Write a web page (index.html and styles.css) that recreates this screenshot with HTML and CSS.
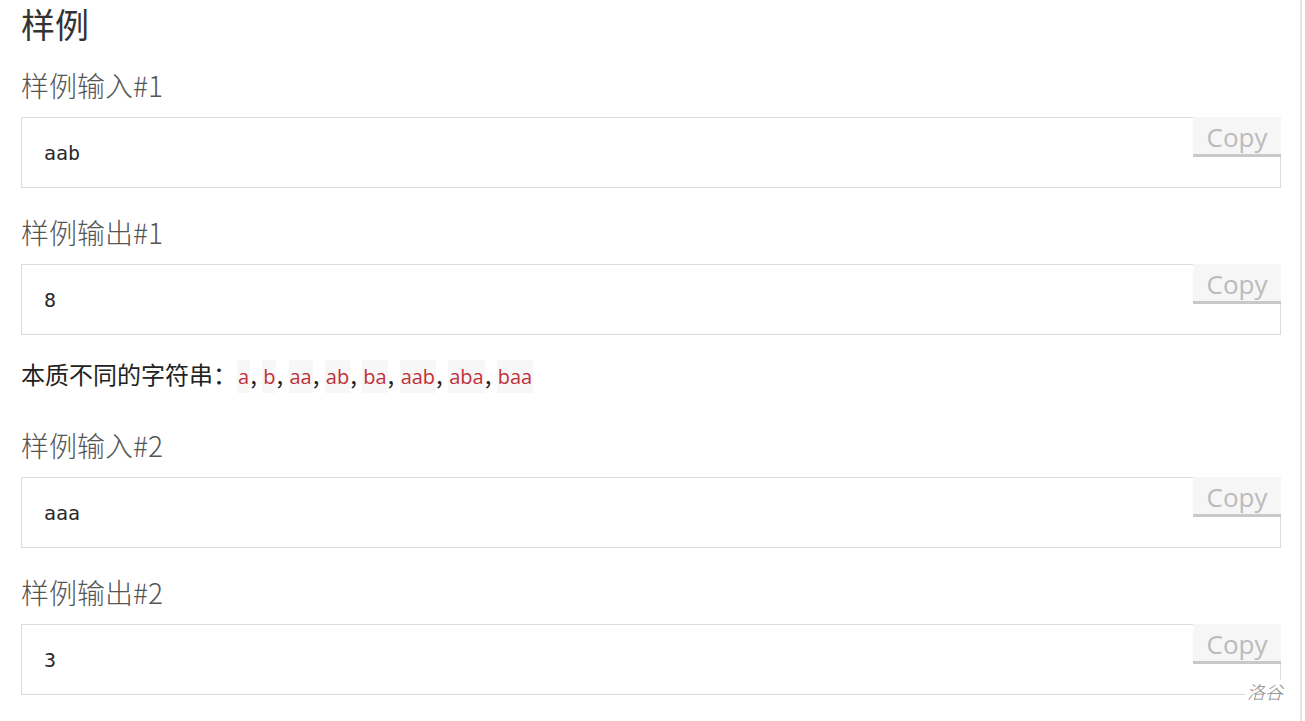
FILE: index.html
```html
<!DOCTYPE html>
<html lang="zh-CN">
<head>
<meta charset="utf-8">
<title>样例</title>
<link rel="stylesheet" href="styles.css">
</head>
<body>
<div class="frame">
  <div class="page">
    <h2 class="title">样例</h2>

    <h3 class="sub">样例输入#1</h3>
    <div class="box"><pre class="code">aab</pre><span class="copy">Copy</span></div>

    <h3 class="sub">样例输出#1</h3>
    <div class="box"><pre class="code">8</pre><span class="copy">Copy</span></div>

    <p class="desc">本质不同的字符串：<code>a</code>, <code>b</code>, <code>aa</code>, <code>ab</code>, <code>ba</code>, <code>aab</code>, <code>aba</code>, <code>baa</code></p>

    <h3 class="sub sub-after-text">样例输入#2</h3>
    <div class="box"><pre class="code">aaa</pre><span class="copy">Copy</span></div>

    <h3 class="sub">样例输出#2</h3>
    <div class="box"><pre class="code">3</pre><span class="copy">Copy</span></div>
  </div>
  <span class="mark">洛谷</span>
</div>
</body>
</html>
```

FILE: styles.css
```css
html, body {
  margin: 0;
  padding: 0;
  background: #fff;
}

body {
  font-family: "Noto Sans CJK SC", "Noto Sans", sans-serif;
  color: #333;
  overflow: hidden;
}

.frame {
  position: relative;
  width: 1302px;
  height: 721px;
  border-right: 2px solid #e3e3e3;
  box-sizing: border-box;
}

.page {
  padding: 0 0 0 21px;
  width: 1260px;
}

.title {
  margin: 0;
  font-size: 34px;
  line-height: 48px;
  font-weight: 400;
  color: #333;
}

.sub {
  margin: 24px 0 0;
  font-size: 28px;
  line-height: 40px;
  font-weight: 300;
  color: #555;
}

.title + .sub {
  margin-top: 17px;
}

.sub-after-text {
  margin-top: 32px;
}

.box {
  position: relative;
  margin-top: 12px;
  height: 71px;
  border: 1px solid #dcdcdc;
  box-sizing: border-box;
  display: flex;
  align-items: center;
}

.code {
  margin: 0;
  padding: 0 0 0 22px;
  font-family: "DejaVu Sans Mono", "Liberation Mono", monospace;
  font-size: 20px;
  line-height: 24px;
  color: #2a2a2a;
}

.copy {
  position: absolute;
  top: -1px;
  right: -1px;
  width: 88px;
  height: 40px;
  box-sizing: border-box;
  padding-top: 2px;
  background: #f6f6f6;
  border-bottom: 3px solid #c8c8c8;
  color: #bbb;
  font-family: "Open Sans", "Noto Sans", sans-serif;
  font-size: 26px;
  line-height: 36px;
  text-align: center;
}

.desc {
  margin: 23px 0 0;
  font-size: 24px;
  line-height: 32px;
  color: #222;
}

.desc code {
  font-family: "Open Sans", "Noto Sans", sans-serif;
  font-size: 20px;
  color: #c0303a;
  background: #f7f7f7;
  padding: 3px 1px;
}

.mark {
  position: absolute;
  right: 17px;
  bottom: 19px;
  font-size: 18px;
  line-height: 22px;
  font-style: italic;
  font-weight: 300;
  color: #888;
  background: #fff;
  padding-left: 2px;
}
```
